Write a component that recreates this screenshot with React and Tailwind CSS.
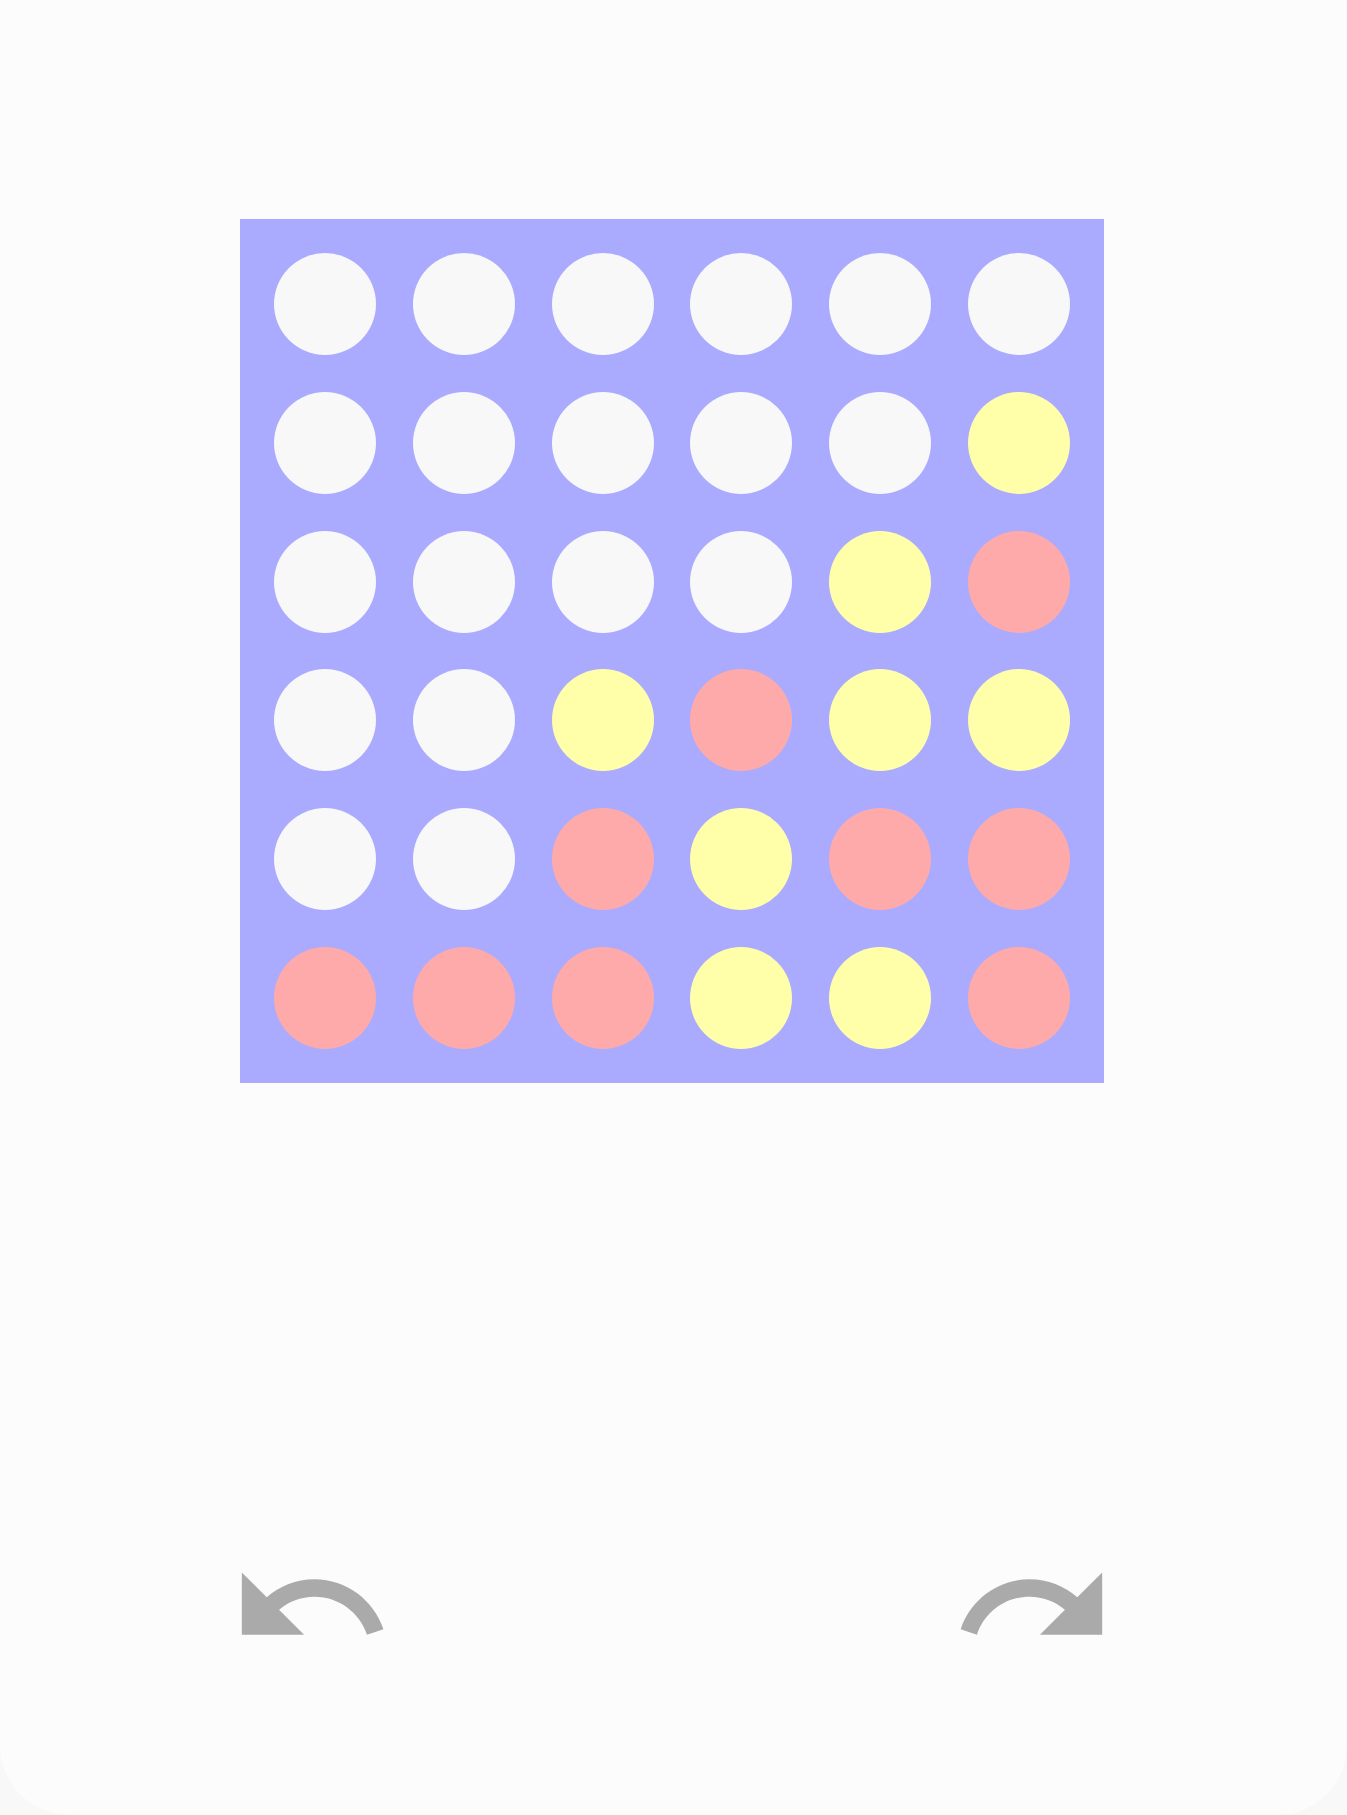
const E = 'e';
const Y = 'y';
const R = 'r';

const board = [
  [E, E, E, E, E, E],
  [E, E, E, E, E, Y],
  [E, E, E, E, Y, R],
  [E, E, Y, R, Y, Y],
  [E, E, R, Y, R, R],
  [R, R, R, Y, Y, R],
];

const cellColor = {
  e: 'bg-[#f8f8f8]',
  y: 'bg-[#ffffaa]',
  r: 'bg-[#ffaaaa]',
};

function UndoIcon() {
  return (
    <svg viewBox="0 0 24 24" className="w-[166px] h-[166px] fill-[#aaaaaa]">
      <path d="M12.5 8c-2.65 0-5.05.99-6.9 2.6L2 7v9h9l-3.62-3.62c1.39-1.16 3.16-1.88 5.12-1.88 3.54 0 6.55 2.31 7.6 5.5l2.37-.78C21.08 11.03 17.15 8 12.5 8z" />
    </svg>
  );
}

function RedoIcon() {
  return (
    <svg viewBox="0 0 24 24" className="w-[166px] h-[166px] fill-[#aaaaaa]">
      <path d="M18.4 10.6C16.55 8.99 14.15 8 11.5 8c-4.65 0-8.58 3.03-9.96 7.22L3.9 16c1.05-3.19 4.05-5.5 7.6-5.5 1.95 0 3.73.72 5.12 1.88L13 16h9V7l-3.6 3.6z" />
    </svg>
  );
}

export default function App() {
  return (
    <div className="min-h-[1815px] bg-[#f8f8f8]">
      <div className="min-h-[1815px] bg-[#fcfcfc] rounded-b-[70px] flex flex-col items-center pt-[219px] pr-[3px]">
        <div className="w-[864px] h-[864px] bg-[#aaaaff] p-[34px] grid grid-cols-[repeat(6,102px)] grid-rows-[repeat(6,102px)] justify-between content-between">
          {board.flat().map((c, i) => (
            <div key={i} className={`w-[102px] h-[102px] rounded-full ${cellColor[c]}`} />
          ))}
        </div>

        <div className="w-[888px] mt-[441px] flex justify-between">
          <button className="block">
            <UndoIcon />
          </button>
          <button className="block">
            <RedoIcon />
          </button>
        </div>
      </div>
    </div>
  );
}
